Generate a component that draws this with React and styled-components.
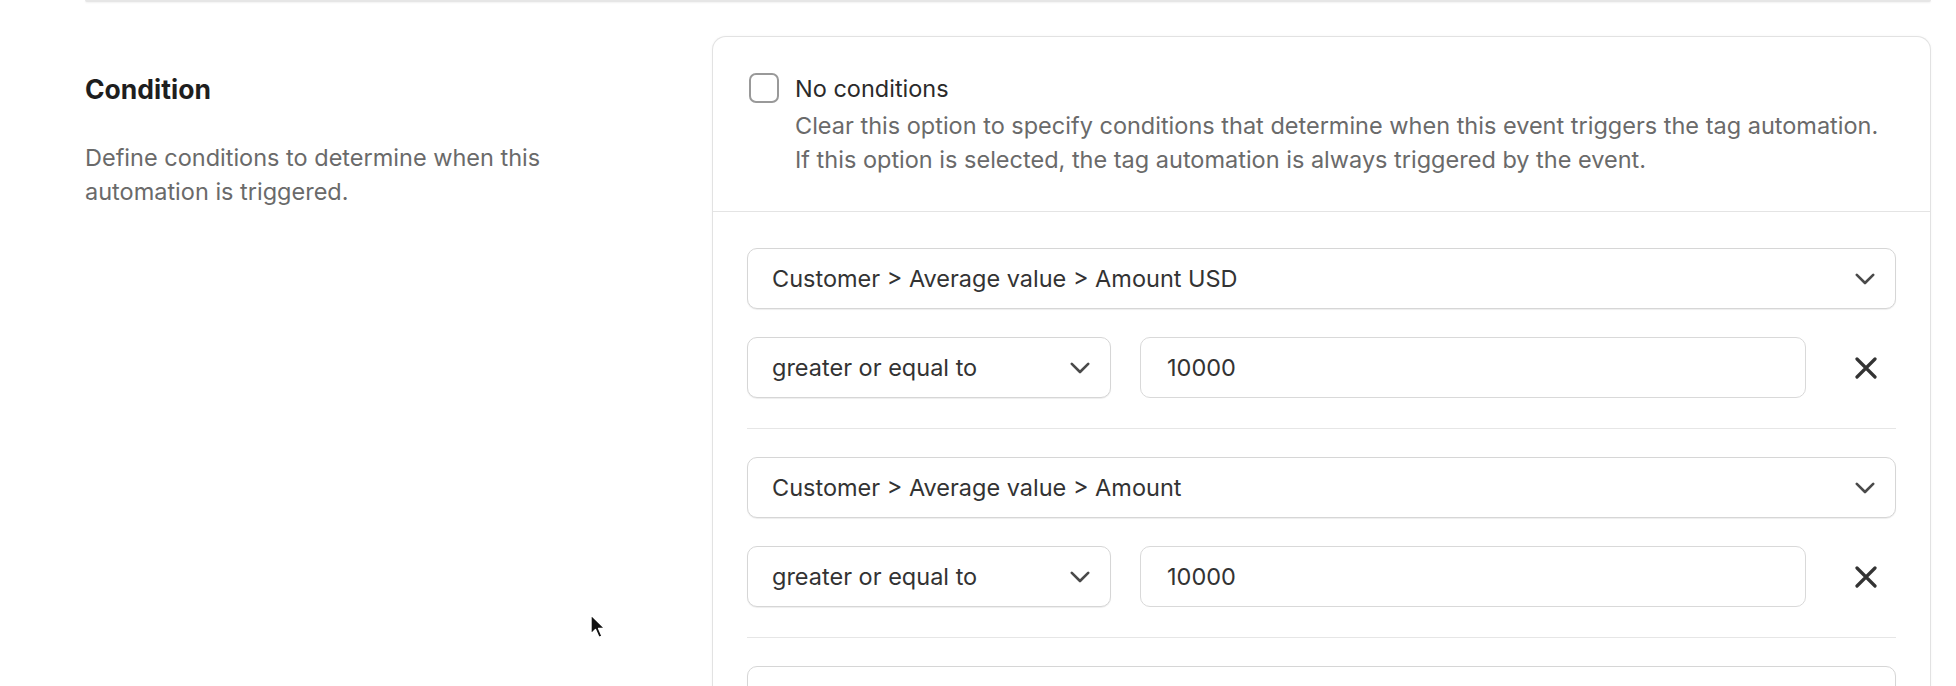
import React from 'react';
import styled, {createGlobalStyle} from 'styled-components';

const groups = [
  {field: 'Customer > Average value > Amount USD', operator: 'greater or equal to', value: '10000'},
  {field: 'Customer > Average value > Amount', operator: 'greater or equal to', value: '10000'}
];

const Chevron = () => (
  <svg width="20" height="12" viewBox="0 0 20 12" fill="none">
    <polyline points="1.8,1.8 10,10 18.2,1.8" stroke="#4a4a4a" strokeWidth="2.6" strokeLinecap="round" strokeLinejoin="round" />
  </svg>
);

const Cross = () => (
  <svg width="22" height="22" viewBox="0 0 22 22" fill="none">
    <path d="M2 2 L20 20 M20 2 L2 20" stroke="#333" strokeWidth="3.2" strokeLinecap="round" />
  </svg>
);

const Cursor = () => (
  <svg width="17" height="26" viewBox="0 0 17 26">
    <path d="M1 1 L1 20 L5.5 15.6 L9 23.5 L12 22.2 L8.6 14.5 L14.8 14.5 Z" fill="#111" stroke="#fff" strokeWidth="1.4" strokeLinejoin="round" />
  </svg>
);

export default function App() {
  return (
    <>
      <GlobalStyle />
      <Page>
        <TopRule />
        <Section>
          <Annotation>
            <Heading>Condition</Heading>
            <Description>Define conditions to determine when this automation is triggered.</Description>
          </Annotation>

          <Card>
            <CardHeader>
              <Checkbox />
              <ChoiceText>
                <ChoiceLabel>No conditions</ChoiceLabel>
                <HelpText>
                  Clear this option to specify conditions that determine when this event triggers the tag automation.
                  <br />
                  If this option is selected, the tag automation is always triggered by the event.
                </HelpText>
              </ChoiceText>
            </CardHeader>

            <CardBody>
              {groups.map((group, i) => (
                <Group key={i}>
                  <Select>
                    <SelectText>{group.field}</SelectText>
                    <Chevron />
                  </Select>
                  <ConditionRow>
                    <Select>
                      <SelectText>{group.operator}</SelectText>
                      <Chevron />
                    </Select>
                    <Input>{group.value}</Input>
                    <RemoveButton>
                      <Cross />
                    </RemoveButton>
                  </ConditionRow>
                </Group>
              ))}
              <Select>
                <SelectText $placeholder>Select filter</SelectText>
                <Chevron />
              </Select>
            </CardBody>
          </Card>
        </Section>

        <Pointer>
          <Cursor />
        </Pointer>
      </Page>
    </>
  );
}

const GlobalStyle = createGlobalStyle`
  html, body {
    margin: 0;
    padding: 0;
    background: #fff;
    overflow: hidden;
  }

  body {
    font-family: Inter, "Noto Sans", "Liberation Sans", sans-serif;
    color: #303030;
  }
`;

const Page = styled.div`
  position: relative;
  height: 686px;
  overflow: hidden;
  padding: 0 25px 0 85px;
`;

const TopRule = styled.div`
  height: 2px;
  background: #e6e6e6;
  border-radius: 0 0 4px 4px;
  box-shadow: 0 1px 2px rgba(0, 0, 0, 0.06);
`;

const Section = styled.div`
  display: grid;
  grid-template-columns: 1fr 2fr;
  column-gap: 17.5px;
  margin-top: 34px;
`;

const Annotation = styled.div`
  padding-top: 36px;
`;

const Heading = styled.h2`
  margin: 0;
  font-size: 26.5px;
  line-height: 34px;
  font-weight: 700;
  color: #1e1e1e;
`;

const Description = styled.p`
  margin: 35px 0 0;
  max-width: 520px;
  font-size: 23.5px;
  line-height: 34px;
  color: #6a6a6a;
`;

const Card = styled.div`
  border: 1px solid #e2e2e2;
  border-bottom: none;
  border-radius: 14px 14px 0 0;
  background: #fff;
  box-shadow: 0 0 3px rgba(0, 0, 0, 0.04);
`;

const CardHeader = styled.div`
  display: flex;
  align-items: flex-start;
  gap: 16px;
  padding: 35px 34px 34px 36px;
  border-bottom: 1px solid #e4e4e4;
`;

const Checkbox = styled.span`
  flex: none;
  box-sizing: border-box;
  width: 30px;
  height: 30px;
  margin-top: 1px;
  border: 2px solid #999;
  border-radius: 7px;
  background: #fff;
`;

const ChoiceText = styled.div`
  display: flex;
  flex-direction: column;
  gap: 3px;
`;

const ChoiceLabel = styled.span`
  font-size: 23.5px;
  line-height: 34px;
  color: #2a2a2a;
`;

const HelpText = styled.span`
  font-size: 23.5px;
  line-height: 34px;
  color: #6a6a6a;
`;

const CardBody = styled.div`
  padding: 36px 34px 0;
`;

const Group = styled.div`
  display: flex;
  flex-direction: column;
  gap: 28px;
  padding-bottom: 30px;
  margin-bottom: 28px;
  border-bottom: 1px solid #e6e6e6;
`;

const Select = styled.div`
  box-sizing: border-box;
  display: flex;
  align-items: center;
  justify-content: space-between;
  height: 61px;
  padding: 0 20px 0 24px;
  border: 1px solid #d6d6d6;
  border-radius: 10px;
  background: #fff;
  box-shadow: 0 1px 1px rgba(0, 0, 0, 0.07);
`;

const SelectText = styled.span`
  font-size: 23.5px;
  color: ${(p) => (p.$placeholder ? '#8a8a8a' : '#333')};
  white-space: nowrap;
`;

const ConditionRow = styled.div`
  display: grid;
  grid-template-columns: 364px 1fr 61px;
  column-gap: 29px;
  align-items: center;
`;

const Input = styled.div`
  box-sizing: border-box;
  display: flex;
  align-items: center;
  height: 61px;
  padding: 0 26px;
  border: 1px solid #d9d9d9;
  border-radius: 10px;
  font-size: 23.5px;
  color: #333;
`;

const RemoveButton = styled.button`
  display: flex;
  align-items: center;
  justify-content: center;
  height: 61px;
  padding: 0;
  border: none;
  background: none;
`;

const Pointer = styled.div`
  position: absolute;
  left: 590px;
  top: 614px;
  line-height: 0;
`;
